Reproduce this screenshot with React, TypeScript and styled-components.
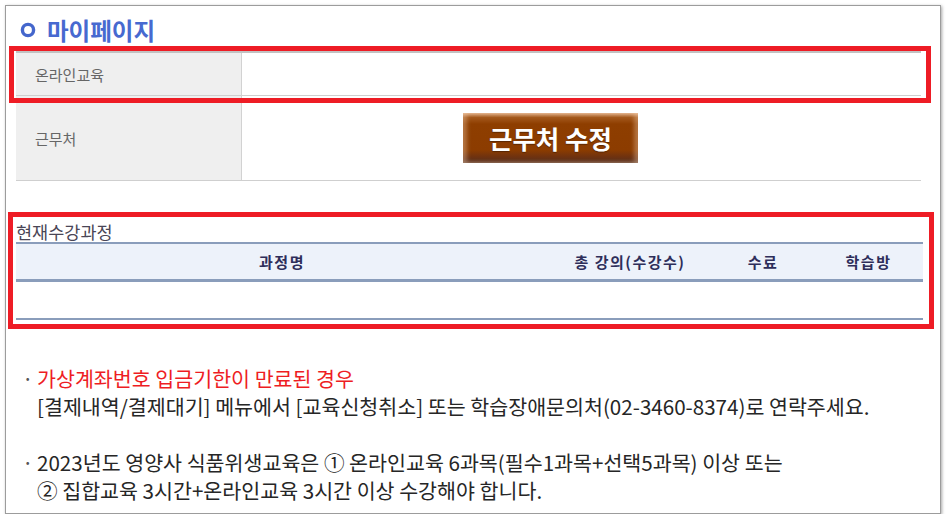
import React from 'react';
import styled, { createGlobalStyle, css } from 'styled-components';

const GlobalStyle = createGlobalStyle`
  html, body {
    margin: 0;
    padding: 0;
    background: #ffffff;
  }
  body {
    font-family: "Noto Sans CJK KR", "Noto Sans", sans-serif;
    color: #333;
  }
`;

const Frame = styled.div`
  box-sizing: border-box;
  margin: 5px 0 0 5px;
  width: 936px;
  height: 509px;
  border: 1px solid #9c9c9c;
  box-shadow: 1px 1px 3px rgba(0, 0, 0, 0.35);
  background: #fff;
  padding: 6px 0 0 10px;
  overflow: hidden;
`;

// red annotation box drawn over a block
const marked = css<{ $box: string }>`
  position: relative;
  &::after {
    content: '';
    position: absolute;
    inset: ${p => p.$box};
    border: 5px solid #ee1c25;
    pointer-events: none;
    z-index: 2;
  }
`;

const Title = styled.h1`
  display: flex;
  align-items: center;
  gap: 11px;
  height: 30px;
  margin: 3px 0 6px 4px;
  font-size: 23.5px;
  font-weight: 700;
  color: #4769d0;
`;

const InfoTable = styled.div`
  width: 905px;
`;

const InfoRow = styled.div<{ $height: number; $first?: boolean; $box?: string }>`
  display: grid;
  grid-template-columns: 226px 1fr;
  height: ${p => p.$height}px;
  border-bottom: 1px solid #cfcfcf;
  border-top: ${p => (p.$first ? '2px solid #c2c2c2' : 'none')};
  ${p => p.$box && marked}
`;

const Label = styled.div`
  display: flex;
  align-items: center;
  padding-left: 19px;
  background: #efefef;
  border-right: 1px solid #d2d2d2;
  font-size: 15px;
  color: #666;
`;

const Value = styled.div`
  display: flex;
  align-items: center;
  justify-content: center;
  padding-right: 62px;
`;

const BrownButton = styled.button`
  width: 175px;
  height: 50px;
  border: none;
  padding: 0 0 2px;
  cursor: pointer;
  font-family: "Noto Sans CJK KR", sans-serif;
  font-size: 25.5px;
  font-weight: 700;
  color: #fff;
  background: linear-gradient(
    to bottom,
    #d9a47a 0%,
    #a4581c 9%,
    #8e3e00 22%,
    #8c3c00 74%,
    #6e3210 88%,
    #543020 100%
  );
  box-shadow: inset 4px 0 4px rgba(255, 220, 190, 0.35),
    inset -4px 0 4px rgba(255, 220, 190, 0.35);
  text-shadow: 0 1px 1px rgba(0, 0, 0, 0.35);
`;

const CourseSection = styled.section<{ $box: string }>`
  width: 907px;
  margin-top: 40px;
  ${marked}
`;

const SectionLabel = styled.div`
  height: 21px;
  line-height: 21px;
  font-size: 17.5px;
  color: #4a4656;
`;

const CourseTable = styled.div`
  border-top: 2px solid #8a9dbb;
  border-bottom: 2px solid #8a9dbb;
`;

const HeadRow = styled.div`
  display: grid;
  grid-template-columns: 532px 164px 102px 1fr;
  height: 35px;
  background: #edf2fa;
  border-bottom: 3px solid #8a9dbb;
`;

const HeadCell = styled.div`
  display: flex;
  align-items: center;
  justify-content: center;
  font-size: 15px;
  font-weight: 700;
  letter-spacing: 1.5px;
  color: #2e2e5a;
`;

const EmptyRow = styled.div`
  height: 36px;
`;

const Notice = styled.ul`
  list-style: none;
  margin: 44px 0 0;
  padding: 0;
  font-size: 20.6px;
  line-height: 28px;
  color: #262626;
`;

const NoticeItem = styled.li`
  display: flex;
  & + & {
    margin-top: 28px;
  }
`;

const Bullet = styled.span`
  flex: 0 0 21px;
  padding-left: 6px;
  box-sizing: border-box;
  color: #555;
`;

const Alert = styled.div`
  color: #ee1d23;
`;

const Ring = () => (
  <svg width="16" height="16" viewBox="0 0 16 16">
    <circle cx="8" cy="8" r="5.6" fill="none" stroke="#4466cc" strokeWidth="3.4" />
  </svg>
);

const headers = ['과정명', '총 강의(수강수)', '수료', '학습방'];

export default function App() {
  return (
    <>
      <GlobalStyle />
      <Frame>
        <Title>
          <Ring />
          마이페이지
        </Title>

        <InfoTable>
          <InfoRow $height={42} $first $box="-7px -10px -8px -7px">
            <Label>온라인교육</Label>
            <Value />
          </InfoRow>
          <InfoRow $height={84}>
            <Label>근무처</Label>
            <Value>
              <BrownButton>근무처 수정</BrownButton>
            </Value>
          </InfoRow>
        </InfoTable>

        <CourseSection $box="-9px -11px -9px -8px">
          <SectionLabel>현재수강과정</SectionLabel>
          <CourseTable>
            <HeadRow>
              {headers.map(h => (
                <HeadCell key={h}>{h}</HeadCell>
              ))}
            </HeadRow>
            <EmptyRow />
          </CourseTable>
        </CourseSection>

        <Notice>
          <NoticeItem>
            <Bullet>·</Bullet>
            <div>
              <Alert>가상계좌번호 입금기한이 만료된 경우</Alert>
              <div>[결제내역/결제대기] 메뉴에서 [교육신청취소] 또는 학습장애문의처(02-3460-8374)로 연락주세요.</div>
            </div>
          </NoticeItem>
          <NoticeItem>
            <Bullet>·</Bullet>
            <div>
              <div>2023년도 영양사 식품위생교육은 ① 온라인교육 6과목(필수1과목+선택5과목) 이상 또는</div>
              <div>② 집합교육 3시간+온라인교육 3시간 이상 수강해야 합니다.</div>
            </div>
          </NoticeItem>
        </Notice>
      </Frame>
    </>
  );
}
